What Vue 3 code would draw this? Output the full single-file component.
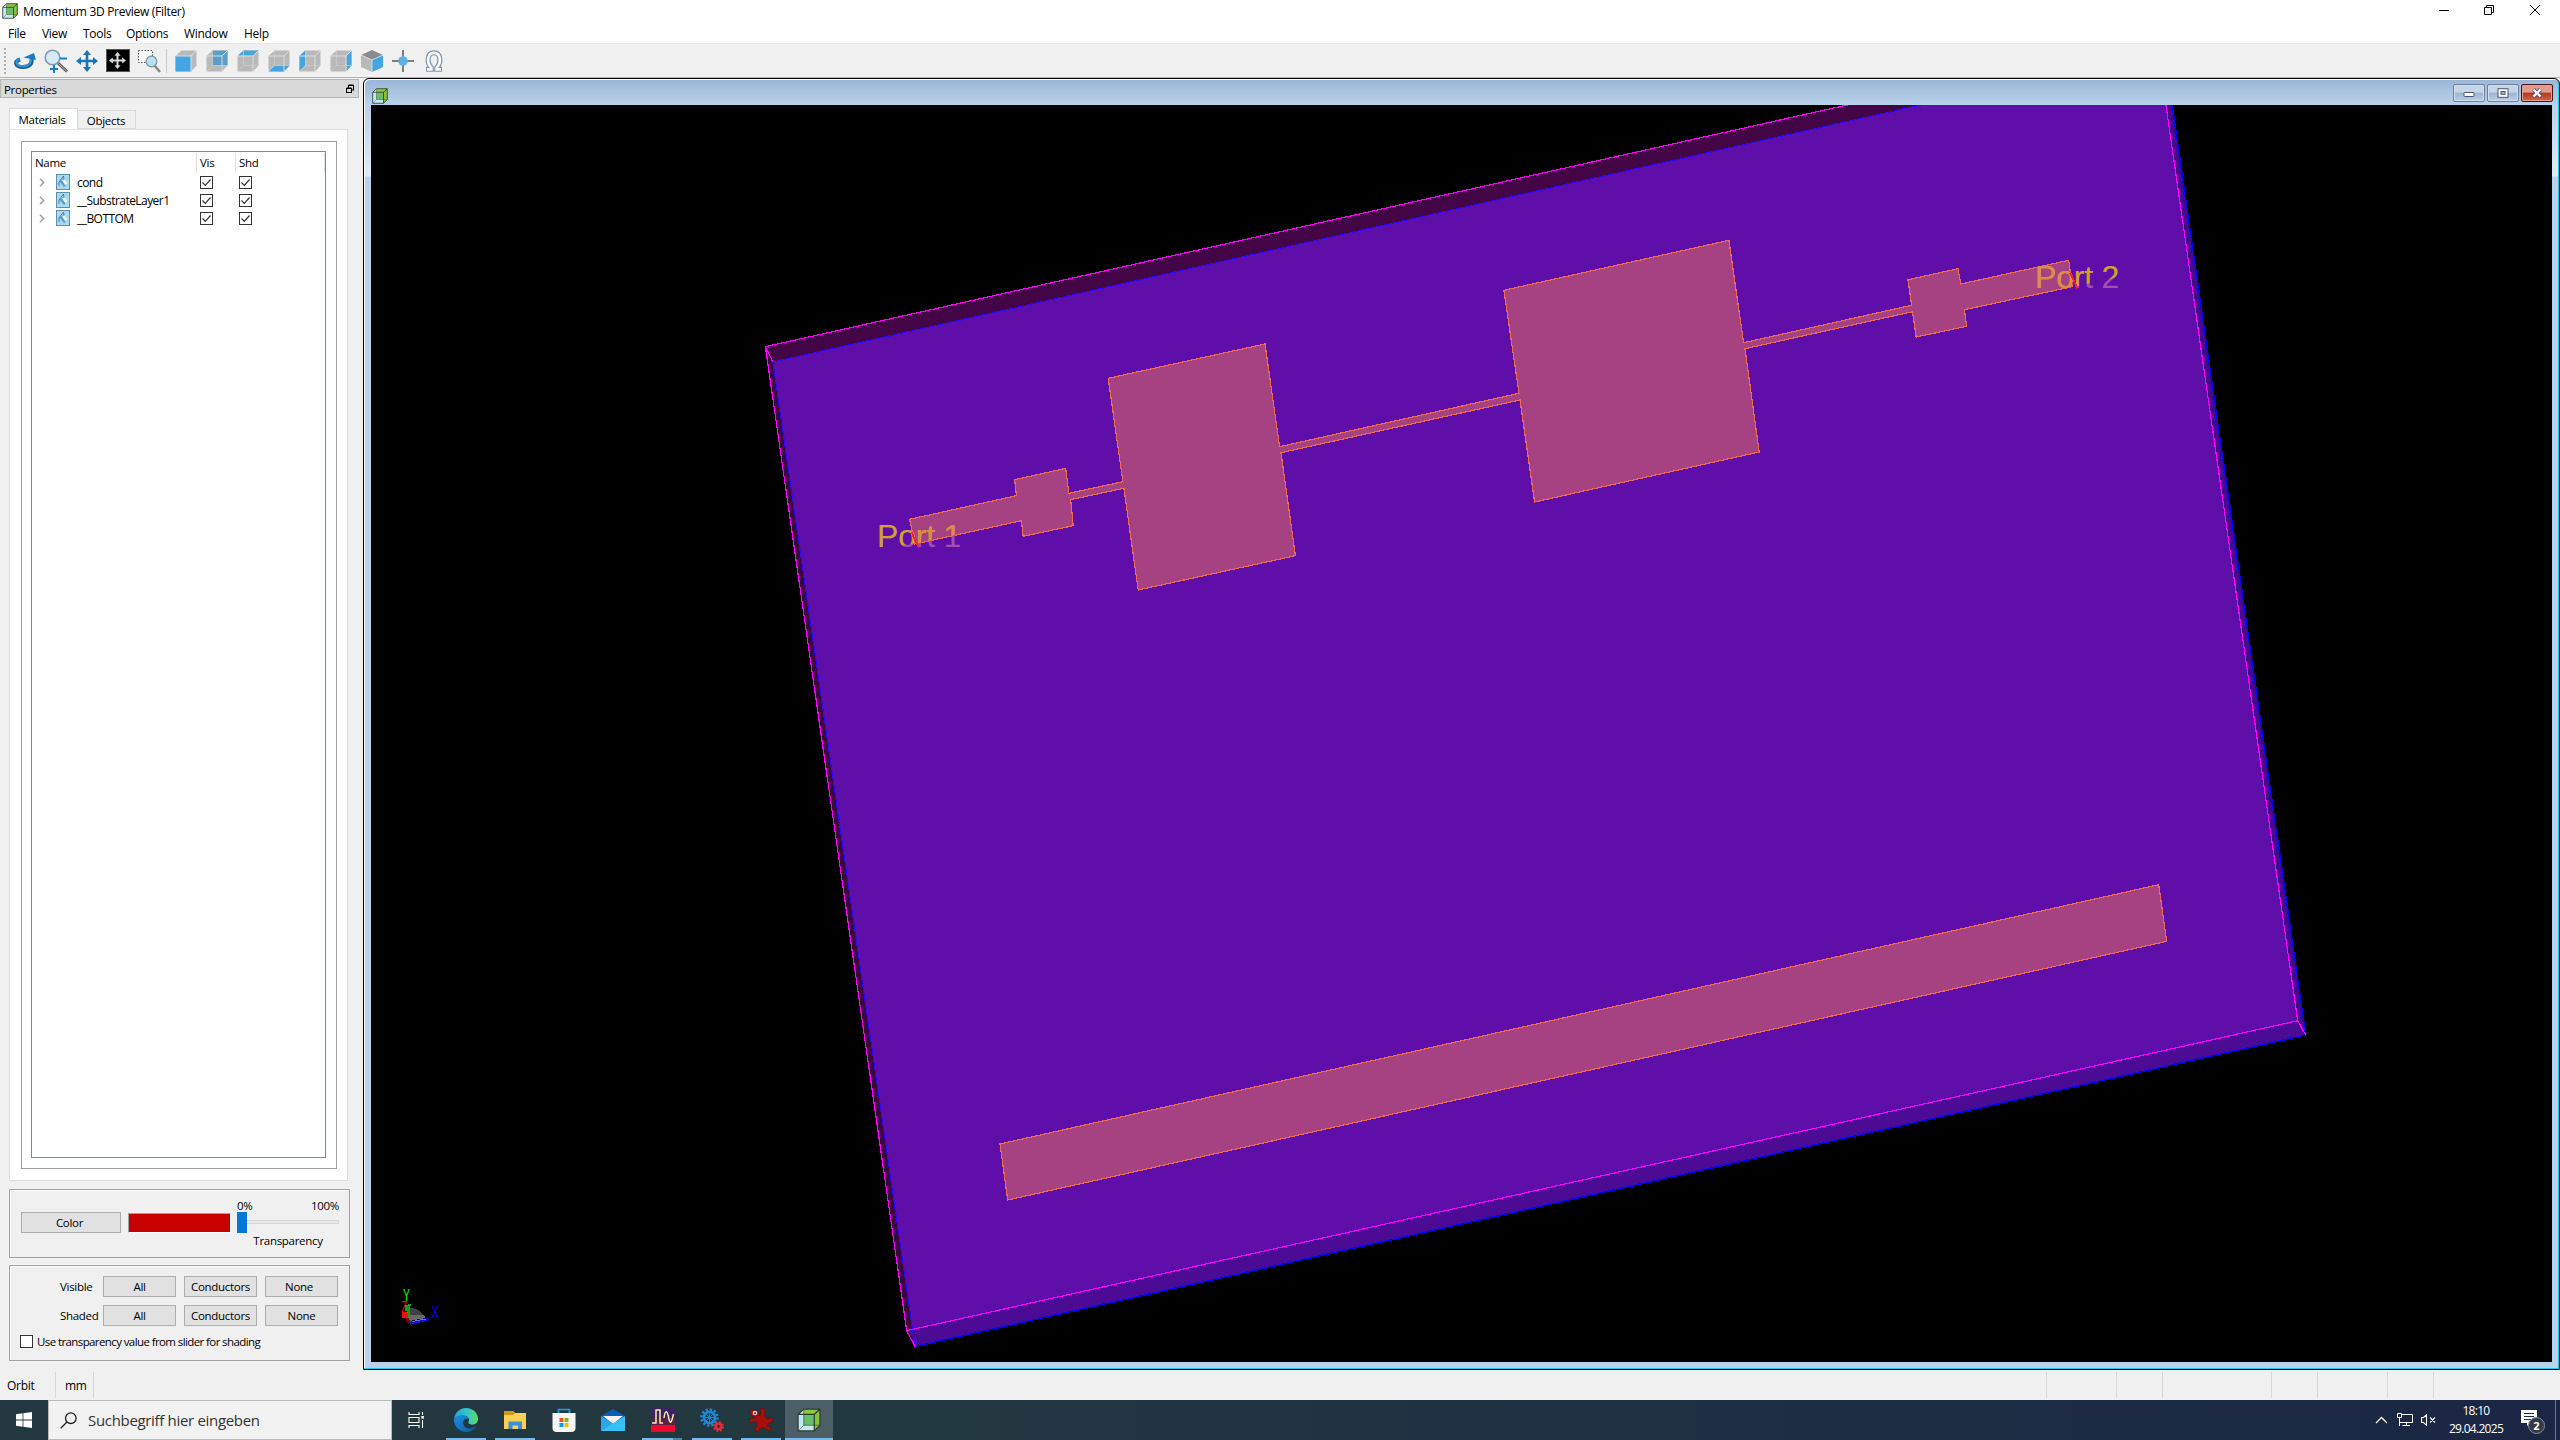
<script setup>
const menus = ['File', 'View', 'Tools', 'Options', 'Window', 'Help']

const faces = {
  back: '6.5,.5 21.5,.5 21.5,15 6.5,15',
  left: '.5,6 6,.5 6,15.5 .5,21',
  bottom: '1,21.5 6.5,15.5 21.5,15.5 16,21.5',
  top: '1,5.5 6.5,.5 21.5,.5 16,5.5',
  right: '16.5,6 21.5,.5 21.5,15.5 16.5,21',
  front: '.5,6 16,6 16,21.5 .5,21.5',
}
const cubes = ['front', 'back', 'top', 'bottom', 'left', 'right']

const materials = ['cond', '__SubstrateLayer1', '__BOTTOM']
const filters = ['Visible', 'Shaded']

const traces = [
  '909.6,519.3 1016.4,495.7 1014.6,479.7 1065.7,468.3 1068.9,493.3 1122.9,481.7 1108.2,378.3 1265,344 1279.6,446.7 1519,393.3 1503.9,290.3 1728.9,240.3 1743.6,342.7 1911.6,305.3 1908,279.7 1958,268.7 1960.8,284 2068.7,260.3 2072.3,286.7 1964.4,309.7 1966.7,326.3 1916.2,337 1912.5,311.7 1745,348.7 1759.2,452 1534.6,502 1520,400 1281,452.7 1295.4,555.7 1138.2,590 1123.9,488.3 1070.7,499.7 1073.2,525.7 1023.2,536.3 1021.4,520.7 915,544',
  '1000,1144 2158.7,884.7 2166.7,941.3 1007.7,1200',
]
const ports = [
  { label: 'Port 1', x: 877, y: 547, line: [911.4, 532, 918.6, 547.5] },
  { label: 'Port 2', x: 2035, y: 288, line: [2070, 272.5, 2077.4, 288.5] },
]
const textLayers = [
  { color: '#a050b0', clip: null },
  { color: '#d0a228', clip: 'url(#above)' },
  { color: '#dc8c46', clip: 'url(#trace)' },
]
const statusCells = [70, 46, 109, 46, 70, 46]
</script>

<template>
  <div class="screen">
    <svg class="defs" width="0" height="0">
      <symbol id="appcube" viewBox="0 0 16 16">
        <path d="M4.5 .7H15.3V11.5L11.5 15.3H.7V4.3Z" fill="#c5e6f3" />
        <path d="M4.5 .7H15.3V11.5H4.5Z" fill="#8bc53f" />
        <path d="M4.5 4.3H11.5V11.5H4.5Z" fill="#69bd6b" />
        <path d="M11.5 4.3L15.3 .7V11.5L11.5 15.3Z" fill="#86c33a" />
        <path d="M4.5 .7H15.3V11.5L11.5 15.3H.7V4.3ZM.7 4.3H11.5V15.3M11.5 4.3L15.3 .7" fill="none" stroke="#2c3a30" stroke-width=".8" />
        <path d="M4.5 .7V11.5H15.3M.7 15.3L4.5 11.5" fill="none" stroke="#2c3a30" stroke-width=".5" opacity=".7" />
      </symbol>
      <symbol id="arrows" viewBox="0 0 22 22">
        <path d="M11 0L15 5H12.3V9.700H17V7L22 11L17 15V12.300H12.3V17H15L11 22L7 17H9.700V12.300H5V15L0 11L5 7V9.700H9.700V5H7Z" />
      </symbol>
    </svg>

    <header class="titlebar">
      <svg class="appicon" width="16" height="16"><use href="#appcube" /></svg>
      <span class="title">Momentum 3D Preview (Filter)</span>
      <div class="winbtns">
        <svg width="46" height="20"><path d="M15 10.5H25" stroke="#000" /></svg>
        <svg width="46" height="20"><path d="M14.500 7.500H21.500V14.500H14.500ZM16.500 7.500V5.500H23.500V12.500H21.500" fill="none" stroke="#000" /></svg>
        <svg width="46" height="20"><path d="M14 5L24 15M24 5L14 15" stroke="#000" /></svg>
      </div>
    </header>
    <nav class="menubar">
      <span v-for="(m, i) in menus" :key="m" :class="'m' + i">{{ m }}</span>
    </nav>

    <div class="toolbar">
      <i class="grip"></i>
      <span class="tool">
        <svg width="22" height="18" viewBox="0 0 22 18">
          <path d="M6 7.500C0 9.500 1 15 9 15C15.500 15 18.500 11.500 17.500 6.500" fill="none" stroke="#135d97" stroke-width="4" />
          <path d="M6 7C.5 9 1.500 14.200 9 14.200C15 14.200 17.800 11 17 6" fill="none" stroke="#2f96d6" stroke-width="2" />
          <path d="M9.500 5.500L20 1L22 8Z" fill="#1c7bbf" />
        </svg>
      </span>
      <span class="tool">
        <svg width="24" height="24" viewBox="0 0 24 24">
          <path d="M14 14L23 22.500" stroke="#555" stroke-width="3" />
          <path d="M14.500 14.500L22.500 22" stroke="#bbb" stroke-width="1" />
          <circle cx="8.500" cy="8.500" r="7.300" fill="#d6ebf7" stroke="#7d9db3" stroke-width="1.600" />
          <path d="M16 9.500H23M6 20H14M10 16V24" stroke="#1482c8" stroke-width="2" />
        </svg>
      </span>
      <span class="tool"><svg width="22" height="22" fill="#1976b8"><use href="#arrows" /></svg></span>
      <span class="tool"><span class="blackbox"><svg width="17" height="17" fill="#d8d8d8"><use href="#arrows" /></svg></span></span>
      <span class="tool">
        <svg width="24" height="24" viewBox="0 0 24 24">
          <path d="M1.500 1.500H15.500V13.500H1.500Z" fill="#fafafa" stroke="#555" stroke-dasharray="1.500 1.500" />
          <path d="M17 16L23 23" stroke="#8a8a8a" stroke-width="2.600" />
          <circle cx="14.500" cy="12.500" r="5.300" fill="#b9dff2" stroke="#7795a8" stroke-width="1.200" />
        </svg>
      </span>
      <i class="tsep"></i>
      <span v-for="c in cubes" :key="c" class="tool">
        <svg width="22" height="22" viewBox="0 0 22 22">
          <polygon points=".5,6 6.500,.5 21.500,.5 21.500,15.500 16,21.500 .5,21.500" fill="#b9b9b9" />
          <polygon v-if="c !== 'front'" :points="faces[c]" :fill="c === 'back' ? '#5b9fc9' : '#43a5e2'" />
          <path v-if="c !== 'front'" d="M1 21L6.500 15.500H21.500M6.500 .5V15.500" fill="none" stroke="#cfcfcf" stroke-width=".7" />
          <polygon v-if="c === 'front'" :points="faces.front" fill="#43a5e2" />
          <path d="M.5 6H16V21.500M16 6L21.500 .5" fill="none" stroke="#dcdcdc" stroke-width="1" />
        </svg>
      </span>
      <span class="tool">
        <svg width="22" height="22" viewBox="0 0 22 22">
          <path d="M11 0L22 5L11 10L0 5Z" fill="#8b8b8b" />
          <path d="M0 5L11 10V22L0 17Z" fill="#b9b9b9" />
          <path d="M11 10L22 5V17L11 22Z" fill="#43a5e2" />
          <path d="M0 5L11 10L22 5M11 10V22" fill="none" stroke="#e4e4e4" stroke-width=".8" />
        </svg>
      </span>
      <span class="tool">
        <svg width="24" height="24" viewBox="0 0 24 24">
          <path d="M12 1V23M1 12H23" stroke="#7d7d7d" stroke-width="2" />
          <circle cx="12" cy="12" r="4.800" fill="#5fb0e4" />
        </svg>
      </span>
      <span class="tool">
        <svg width="18" height="22" viewBox="0 0 18 22" fill="none">
          <path d="M1 19.300H6.300V17.500C1.500 13 2 2.800 9 2.800C16 2.800 16.500 13 11.700 17.500V19.300H17" stroke="#7f93b0" stroke-width="5" />
          <path d="M2 19.300H6.300V17.500C1.500 13 2 2.800 9 2.800C16 2.800 16.500 13 11.700 17.500V19.300H16" stroke="#fff" stroke-width="2.700" />
        </svg>
      </span>
    </div>

    <main class="body">
      <aside class="side">
        <div class="dockhead">
          <span>Properties</span>
          <svg width="9" height="10" viewBox="0 0 9 10"><path d="M.5 4.500H5.500V8.500H.5ZM2.500 4V1.500H7.500V6H6M.5 4H5.500M2.500 1H7.500" fill="none" stroke="#000" stroke-width="1.100" /></svg>
        </div>
        <div class="tabs">
          <span class="tab on">Materials</span>
          <span class="tab">Objects</span>
        </div>
        <section class="pane">
          <div class="frame">
            <div class="tree">
              <div class="row head"><span class="name">Name</span><span class="c1">Vis</span><span class="c2">Shd</span></div>
              <div v-for="m in materials" :key="m" class="row">
                <svg class="chev" width="6" height="9" viewBox="0 0 6 9"><path d="M1 .8L4.700 4.500L1 8.200" fill="none" stroke="#a0a0a0" stroke-width="1.500" /></svg>
                <svg class="bucket" width="14" height="16" viewBox="0 0 14 16">
                  <rect x=".5" y=".5" width="13" height="15" fill="#a9d8f1" stroke="#5c8fad" />
                  <path d="M3.500 7.500L8 4.500L12 9.500L8 13Z" fill="#4b9fd0" />
                  <path d="M6 6.500L8.500 5L12 9.200L9.500 11.500Z" fill="#e9f6fc" />
                  <path d="M3 12V8L7.500 2L8 5.500" fill="none" stroke="#47708a" stroke-width=".9" />
                </svg>
                <span class="name">{{ m }}</span>
                <span v-for="n in 2" :key="n" class="check" :class="'k' + n">
                  <svg width="11" height="11" viewBox="0 0 11 11"><path d="M1.500 5.500L4.300 8.300L9.500 2.500" fill="none" stroke="#333" stroke-width="1.200" /></svg>
                </span>
              </div>
            </div>
          </div>
        </section>

        <section class="group colorgrp">
          <button class="btn wide">Color</button>
          <div class="swatch"></div>
          <div class="slider">
            <div class="ends"><span>0%</span><span>100%</span></div>
            <div class="track"><i class="thumb"></i><i class="groove"></i></div>
            <div class="caption">Transparency</div>
          </div>
        </section>

        <section class="group filtergrp">
          <div v-for="f in filters" :key="f" class="frow">
            <span class="flabel">{{ f }}</span>
            <button class="btn">All</button>
            <button class="btn">Conductors</button>
            <button class="btn" :class="{ nudge: f === 'Visible' }">None</button>
          </div>
          <div class="opt"><i class="box"></i><span>Use transparency value from slider for shading</span></div>
        </section>
      </aside>

      <section class="mdi">
        <div class="mdititle">
          <svg width="16" height="16"><use href="#appcube" /></svg>
          <div class="mdibtns">
            <span class="mb"><svg width="12" height="10"><rect x="1" y="4.500" width="10" height="4" rx=".5" fill="#fff" stroke="#4c5772" /></svg></span>
            <span class="mb"><svg width="12" height="10"><rect x="1" y=".7" width="10" height="8.600" fill="#fff" stroke="#4c5772" /><rect x="4" y="3.500" width="4" height="2.800" fill="#9db8d4" stroke="#4c5772" /></svg></span>
            <span class="mb close"><svg width="12" height="10"><path d="M2.500 1.500L9.500 8.500M9.500 1.500L2.500 8.500" stroke="#57507a" stroke-width="4.200" /><path d="M2.500 1.500L9.500 8.500M9.500 1.500L2.500 8.500" stroke="#fff" stroke-width="2.400" /></svg></span>
          </div>
        </div>
        <svg class="view" width="2181" height="1257" viewBox="371 105 2181 1257" shape-rendering="crispEdges">
          <defs>
            <clipPath id="above"><polygon points="371,200 371,663.5 2552,181 2552,100" /></clipPath>
            <clipPath id="trace"><polygon :points="traces[0]" /></clipPath>
          </defs>
          <rect x="371" y="105" width="2181" height="1257" fill="#000" />
          <polygon points="765.4,346.7 2152,36.600 2162,51 772.9,362" fill="#430545" />
          <polygon points="765.4,346.7 772.9,362 915,1346.500 906.7,1330.7" fill="#3c053e" />
          <polygon points="772.9,362 2164.3,50.500 2305.7,1035 915,1346.5" fill="#600eaa" />
          <polygon points="909.500,1330.300 2297.700,1020.700 2305.7,1035 915,1346.5" fill="#4b0b95" />
          <polygon points="2156,36 2164.3,50.500 2305.700,1035 2297.700,1020.700" fill="#430b8c" />
          <g fill="none" stroke-width="1.200">
            <path d="M915 1346.500L772.9 362L2164.3 50.500" stroke="#2b08ff" />
            <path d="M2164.3 50.500L2305.7 1035L915 1346.500" stroke="#0000ff" stroke-width="1.500" />
            <path d="M2156 36L765.4 346.700L906.7 1330.700L2297.7 1020.700L2156 36M765.4 346.700L772.9 362M906.7 1330.700L915 1346.500M2297.7 1020.700L2305.700 1035" stroke="#ff00ff" />
          </g>
          <polygon v-for="t in traces" :key="t" :points="t" fill="#a64182" stroke="#ee6a50" stroke-width="1.200" />
          <g v-for="p in ports" :key="p.label">
            <text v-for="l in textLayers" :key="l.color" :x="p.x" :y="p.y" :fill="l.color" :clip-path="l.clip" class="port">{{ p.label }}</text>
            <line :x1="p.line[0]" :y1="p.line[1]" :x2="p.line[2]" :y2="p.line[3]" stroke="#ff1a33" stroke-width="1.800" />
          </g>
          <g class="triad">
            <path d="M409 1321V1308A16 14 0 0 1 425 1318Z" fill="#414141" />
            <path d="M409 1321V1315L424 1315L425.500 1318Z" fill="#686868" />
            <path d="M410 1323L427 1319.500" stroke="#1414d8" stroke-width="3" />
            <path d="M412 1321.500L426 1319" stroke="#6a6aff" stroke-width="1" />
            <path d="M427 1317L431 1319.500L427 1322Z" fill="#00006c" />
            <path d="M405 1315L409.500 1323" stroke="#7d0000" stroke-width="3" />
            <path d="M406.500 1305V1311M407.500 1305H410.500M408.500 1306V1318" stroke="#0fa01a" stroke-width="2.400" />
            <circle cx="404.800" cy="1315.300" r="3.200" fill="#f01010" />
            <text x="403" y="1301" fill="#00ff00" textLength="7" lengthAdjust="spacingAndGlyphs">Y</text>
            <text x="401" y="1313" fill="#ff0000" textLength="6" lengthAdjust="spacingAndGlyphs">Z</text>
            <text x="431.500" y="1317.500" fill="#0000ff" textLength="7" lengthAdjust="spacingAndGlyphs">X</text>
          </g>
        </svg>
      </section>
    </main>

    <footer class="status">
      <span class="s1">Orbit</span>
      <span class="s2">mm</span>
      <div class="scells"><i v-for="(w, i) in statusCells" :key="i" :style="{ width: w + 'px' }"></i><i class="last"></i></div>
    </footer>

    <footer class="taskbar">
      <span class="start">
        <svg width="16" height="16" viewBox="0 0 16 16" fill="#fff"><path d="M0 2.200L6.600 1.300V7.500H0ZM7.400 1.200L16 0V7.500H7.400ZM0 8.500H6.600V14.700L0 13.800ZM7.400 8.500H16V16L7.400 14.800Z" /></svg>
      </span>
      <div class="search">
        <svg width="17" height="17" viewBox="0 0 17 17"><circle cx="10.800" cy="6.200" r="5.300" fill="none" stroke="#222" stroke-width="1.300" /><path d="M7 10L.7 16.300" stroke="#222" stroke-width="1.300" /></svg>
        <span>Suchbegriff hier eingeben</span>
      </div>
      <span class="app tv">
        <svg width="17" height="16" viewBox="0 0 17 16" fill="none" stroke="#fff" stroke-width="1.100"><path d="M1 0V2.500H11V0M1 16V13.500H11V16M1 5.500H11V10.500H1ZM14.500 0V3M14.500 8V16" /><rect x="13.300" y="4" width="2.600" height="2.600" fill="#fff" stroke="none" /></svg>
      </span>
      <span class="app run">
        <svg width="24" height="24" viewBox="0 0 24 24">
          <defs>
            <linearGradient id="eg" x1="0" x2="1"><stop offset="0" stop-color="#1ea6dc" /><stop offset=".55" stop-color="#31c6cf" /><stop offset="1" stop-color="#62dc5c" /></linearGradient>
            <linearGradient id="eb" x1="0" y1="0" x2="1" y2="1"><stop offset="0" stop-color="#1b92de" /><stop offset="1" stop-color="#0c59a4" /></linearGradient>
          </defs>
          <path d="M0 11C1 4 6 0 12 0C19 0 24 5 24 11C24 14 22 16.500 18.500 16.500C15 16.500 13.500 15 14.500 13.500C16 11 14 7.500 9 7.500C5 7.500 1.500 9 0 11Z" fill="url(#eg)" />
          <path d="M0 11C2 8 6 7 9.500 7.500C13 8 14.500 10 14.300 11C10 10 8 14 10 17.500C12 21 17 21.500 22 18C20 22 16 24 12 24C5 24 0 18.500 0 11Z" fill="url(#eb)" />
          <path d="M14.300 11C10 10 8 14 10 17.500C12 21 17 21 22 17.800C18 18.500 13 17 14.300 13.700Z" fill="#22363f" opacity=".55" />
        </svg>
      </span>
      <span class="app run">
        <svg width="22" height="18" viewBox="0 0 22 18"><path d="M0 0H9L11 2H22V18H0Z" fill="#f9d055" /><path d="M0 0H9L11 2L9 4H0Z" fill="#d9950f" /><path d="M4.500 18V10.500H18V18H14V14.500H8.500V18Z" fill="#3b8fd9" /></svg>
      </span>
      <span class="app">
        <svg width="24" height="24" viewBox="0 0 24 24"><path d="M6.500 6V1.500H17.500V6" fill="none" stroke="#1da0ea" stroke-width="1.700" /><path d="M.5 5H23.500V20Q23.500 24 19.500 24H4.500Q.5 24 .5 20Z" fill="#f6f6f6" /><rect x="7.500" y="10" width="4" height="4" fill="#f25022" /><rect x="12.500" y="10" width="4" height="4" fill="#7fba00" /><rect x="7.500" y="15" width="4" height="4" fill="#00a4ef" /><rect x="12.500" y="15" width="4" height="4" fill="#ffb900" /></svg>
      </span>
      <span class="app">
        <svg width="24" height="22" viewBox="0 0 24 22"><path d="M0 7L12 0L24 7V14H0Z" fill="#0b5fb4" /><path d="M2 7H22L12 15Z" fill="#f3f3f3" /><path d="M0 7L14 16L24 22H0Z" fill="#2ba6ea" /><path d="M24 7L0 22H24Z" fill="#35c2f2" /></svg>
      </span>
      <span class="app run multi">
        <svg width="24" height="24" viewBox="0 0 24 24"><rect width="24" height="17" fill="#3a2361" /><path d="M0 10H24V17H0Z" fill="#5a2148" /><rect y="17" width="24" height="7" fill="#ee0a2c" /><path d="M1 15H5V2H9V15H12M13 10C14 2 16 2 17.500 9S20 17 22.500 6" fill="none" stroke="#fbe9b4" stroke-width="1.500" /></svg>
      </span>
      <span class="app run">
        <svg width="24" height="24" viewBox="0 0 24 24" fill="none"><circle cx="9.500" cy="9.500" r="8" stroke="#1f86d0" stroke-width="2.600" stroke-dasharray="2.300 1.890" /><circle cx="9.500" cy="9.500" r="5.600" stroke="#1f86d0" stroke-width="2.600" /><path d="M9.500 4V15M4 9.500H15M5.600 5.600L13.400 13.400M13.400 5.600L5.600 13.400" stroke="#1f86d0" stroke-width="1" /><circle cx="18.500" cy="18.500" r="4.500" stroke="#dd2c35" stroke-width="2" stroke-dasharray="1.900 1.630" /><circle cx="18.500" cy="18.500" r="2.700" stroke="#dd2c35" stroke-width="2.600" /></svg>
      </span>
      <span class="app run">
        <svg width="24" height="24" viewBox="0 0 24 24"><path d="M1 4C2 1 8 1 9 5L11 8L12 4L11 1L15 0L16 4L15.500 8L18 11L23 9.500L24 13L19 16L18 17.500L22 20L20.500 23L14.500 19.500L12 20L9 23.500L5.500 22.500L8.500 16L7 13.500L1 14.500L.5 11.500L7 9.500L3 8Z" fill="#a80f0c" stroke="#5c0a0a" stroke-width=".5" /><circle cx="6" cy="5" r="2.300" fill="#e9d6d2" /><circle cx="6" cy="5.200" r="1" fill="#333" /></svg>
      </span>
      <span class="app active"><svg width="24" height="24"><use href="#appcube" /></svg></span>
      <div class="tray">
        <svg class="t1" width="13" height="8" viewBox="0 0 13 8"><path d="M1 7L6.500 1.500L12 7" fill="none" stroke="#fff" stroke-width="1.300" /></svg>
        <svg class="t2" width="16" height="14" viewBox="0 0 16 14" fill="none" stroke="#fff"><path d="M5 1.500H15.500V9.500H2.500V5.500M9.500 9.500V12.500M5.500 12.500H13M.5 .5H4.500V4.500H.5ZM2.500 5V13" /></svg>
        <svg class="t3" width="15" height="12" viewBox="0 0 15 12" fill="none" stroke="#fff" stroke-width="1.100"><path d="M.6 3.500H2.500L5.500 .8V11.200L2.500 8.500H.6ZM9 3.500L14 8.500M14 3.500L9 8.500" /></svg>
        <div class="clock"><span>18:10</span><span>29.04.2025</span></div>
        <div class="notif">
          <svg width="16" height="16" viewBox="0 0 16 16"><path d="M0 0H16V13H9L6 16V13H0Z" fill="#fff" /><path d="M3 3.500H13M3 6.500H13M3 9.500H10" stroke="#1b2943" /></svg>
          <b>2</b>
        </div>
        <i class="desk"></i>
      </div>
    </footer>
  </div>
</template>

<style>
body { margin: 0; overflow: hidden; }
</style>

<style scoped>
* { box-sizing: border-box; }
.screen { width: 2560px; height: 1440px; display: flex; flex-direction: column; background: #f0f0f0; font: 11.5px "Open Sans", "Noto Sans", sans-serif; letter-spacing: -.3px; color: #000; overflow: hidden; white-space: nowrap; }
svg { display: block; flex: none; }
.defs { position: absolute; }
.titlebar { height: 24px; background: #fff; display: flex; align-items: flex-start; padding: 3px 0 0 2px; }
.title { margin-left: 5px; line-height: 17px; font-size: 12px; }
.winbtns { margin-left: auto; display: flex; margin-top: -3px; margin-right: -2px; }
.menubar { height: 20px; background: #fff; display: flex; line-height: 20px; font-size: 12px; padding-left: 8px; border-bottom: 1px solid #e8e8e8; }
.m0 { width: 34px; } .m1 { width: 41px; } .m2 { width: 43px; } .m3 { width: 58px; } .m4 { width: 60px; }
.toolbar { height: 34px; display: flex; align-items: center; padding-left: 4px; border-bottom: 1px solid #b4b4b4; background: #f0f0f0; }
.grip { width: 2px; height: 26px; background: repeating-linear-gradient(#b0b0b0 0 2px, transparent 2px 4px); margin-right: 3px; }
.tool { width: 31px; display: flex; justify-content: center; }
.tsep { width: 1px; height: 24px; background: #c9c9c9; margin: 0 3px 0 2px; }
.blackbox { width: 24px; height: 23px; background: #000; border: 1px solid #555; display: flex; align-items: center; justify-content: center; }
.body { height: 1292px; display: flex; align-items: stretch; }
.side { width: 363px; display: flex; flex-direction: column; }
.dockhead { width: 359px; height: 19px; margin-top: 1px; background: #d9d9d9; border: 1px solid #b5b5b5; display: flex; justify-content: space-between; align-items: center; padding: 1px 3px 0 3px; }
.tabs { display: flex; align-items: flex-end; height: 31px; padding-left: 9px; }
.tab { width: 58px; height: 19px; border: 1px solid #d9d9d9; border-left: 0; display: flex; align-items: center; justify-content: center; padding: 1px 1px 0 0; }
.tab.on { width: 69px; height: 21px; background: #fff; border-left: 1px solid #d9d9d9; border-bottom: 0; padding-right: 3px; }
.pane { margin-left: 9px; width: 339px; height: 1052px; background: #fff; border: 1px solid #dcdcdc; padding: 11px; }
.tabs + .pane { border-top-color: #e4e4e4; }
.frame { width: 316px; height: 1028px; border: 1px solid #a0a0a0; padding: 9px 9px; }
.tree { height: 1007px; width: 295px; border: 1px solid #828790; padding-top: 1px; }
.row { height: 18px; display: flex; align-items: center; }
.row.head { height: 20px; align-items: stretch; line-height: 20px; }
.head .name { width: 165px; padding-left: 3px; border-right: 1px solid #e0e0e0; }
.head .c1 { width: 39px; padding-left: 3px; border-right: 1px solid #e0e0e0; }
.head .c2 { width: 89px; padding-left: 3px; border-right: 1px solid #e0e0e0; }
.chev { margin-left: 7px; }
.bucket { margin-left: 11px; }
.row:not(.head) .name { width: 130px; padding-left: 7px; font-size: 12px; letter-spacing: -.55px; }
.check { width: 13px; height: 13px; border: 1px solid #333; background: #fff; }
.k2 { margin-left: 26px; }
.group { margin-left: 9px; width: 341px; border: 1px solid #a0a0a0; box-shadow: inset 1px 1px #fff, 0 0 0 .5px #fafafa; }
.colorgrp { margin-top: 8px; height: 69px; display: flex; padding: 0 0 0 11px; }
.btn { width: 73px; height: 21px; font: inherit; letter-spacing: inherit; color: inherit; background: #e1e1e1; border: 1px solid #adadad; padding: 0; line-height: 18px; }
.btn.wide { width: 100px; margin-top: 22px; padding-right: 3px; }
.swatch { width: 103px; height: 20px; margin: 23px 6px 0 7px; background: #c80000; border: 1px solid #a0a0a0; border-right-color: #fff; border-bottom-color: #fff; }
.slider { width: 102px; padding-top: 9px; }
.ends { display: flex; justify-content: space-between; line-height: 13px; height: 13px; }
.track { display: flex; align-items: center; height: 21px; }
.thumb { width: 10px; height: 21px; background: #0078d7; }
.groove { flex: 1; height: 4px; background: #e7eaea; border: 1px solid #d6d6d6; border-left: 0; margin-top: -1px; }
.caption { text-align: center; line-height: 15px; }
.filtergrp { margin-top: 7px; height: 96px; padding-top: 10px; }
.frow { display: flex; align-items: center; gap: 8px; margin-bottom: 8px; padding-left: 50px; }
.flabel { width: 35px; line-height: 20px; }
.btn.nudge { padding-right: 5px; }
.opt { display: flex; align-items: center; padding-left: 10px; height: 15px; letter-spacing: -.6px; }
.box { width: 13px; height: 13px; border: 1px solid #333; background: #fff; margin-right: 4px; }
.mdi { width: 2197px; height: 1292px; border: 1px solid #000; border-radius: 6px 6px 0 0; box-shadow: inset -1px -1px #21cbe8, inset 1px 1px #fff; background: linear-gradient(#9ab6d6, #b9d1ea 26px, #dce8f5 90px, #dfeaf6 97px, #b9d1ea 98px); padding: 0 7px; }
.mdititle { height: 26px; display: flex; padding-top: 9px; padding-left: 1px; }
.mdibtns { margin-left: auto; margin-right: -1px; display: flex; gap: 2px; margin-top: -4px; }
.mb { width: 32px; height: 18px; border: 1px solid #6c7f9d; border-radius: 2px; box-shadow: inset 0 0 0 1px #d0deee; background: linear-gradient(#c4d5e8 45%, #9bb5d2 50%, #b8cee6); display: flex; align-items: center; justify-content: center; }
.mb.close { border-color: #43151c; box-shadow: inset 0 0 0 1px #e0a093; background: linear-gradient(#e09d8f 45%, #b8321c 50%, #cf6a50); }
.port { font: 32px "Liberation Sans", Arial, sans-serif; letter-spacing: -.2px; }
.triad text { font: 16px "Liberation Sans", Arial, sans-serif; letter-spacing: 0; }
.status { height: 30px; display: flex; font-size: 12px; line-height: 32px; padding: 0 0 2px; }
.s1 { width: 56px; padding-left: 7px; border-right: 1px solid #d7d7d7; margin-top: 2px; line-height: 28px; height: 26px; }
.s2 { width: 38px; padding-left: 9px; border-right: 1px solid #d7d7d7; margin-top: 2px; line-height: 28px; height: 26px; }
.scells { margin-left: auto; display: flex; padding-top: 2px; }
.scells i { border-left: 1px solid #d7d7d7; height: 26px; }
.scells .last { width: 127px; }
.taskbar { height: 40px; display: flex; background: linear-gradient(90deg, #22373f 0, #22383f 35%, #1e3144 60%, #1b2943 90%, #1b2644); }
.start { width: 48px; display: flex; align-items: center; justify-content: center; }
.search { width: 344px; border: 1px solid #b9b9b9; background: #f2f2f2; display: flex; align-items: center; padding-left: 11px; font-size: 15px; letter-spacing: -.32px; color: #333; }
.search span { margin-left: 11px; }
.app { width: 49.1px; display: flex; align-items: center; justify-content: center; position: relative; }
.app.tv { width: 49.6px; }
.run::after { content: ""; position: absolute; bottom: 0; left: 4.500px; width: 40px; height: 2px; background: #76b9ed; }
.multi::after { background: linear-gradient(90deg, #76b9ed 31px, #4f86a8 31px); }
.app.active { background: #4c5f66; width: 48px; box-shadow: inset 0 -2px #76b9ed; }
.tray { margin-left: auto; display: flex; align-items: center; color: #fff; width: 186px; }
.t1 { margin-left: 1px; } .t2 { margin-left: 9px; } .t3 { margin-left: 8px; }
.clock { width: 66px; margin-left: 7px; display: flex; flex-direction: column; text-align: center; line-height: 18px; font-size: 12px; padding-bottom: 1px; letter-spacing: -.7px; }
.notif { position: relative; width: 24px; height: 24px; margin: 4px 0 0 12px; }
.notif b { position: absolute; left: 7px; top: 7px; width: 17px; height: 17px; border-radius: 50%; background: #333a44; border: 1px solid #8a8f96; font-size: 11px; line-height: 15px; text-align: center; letter-spacing: 0; }
.desk { width: 1px; height: 40px; background: #6d7688; margin-left: auto; margin-right: 4px; }
</style>
